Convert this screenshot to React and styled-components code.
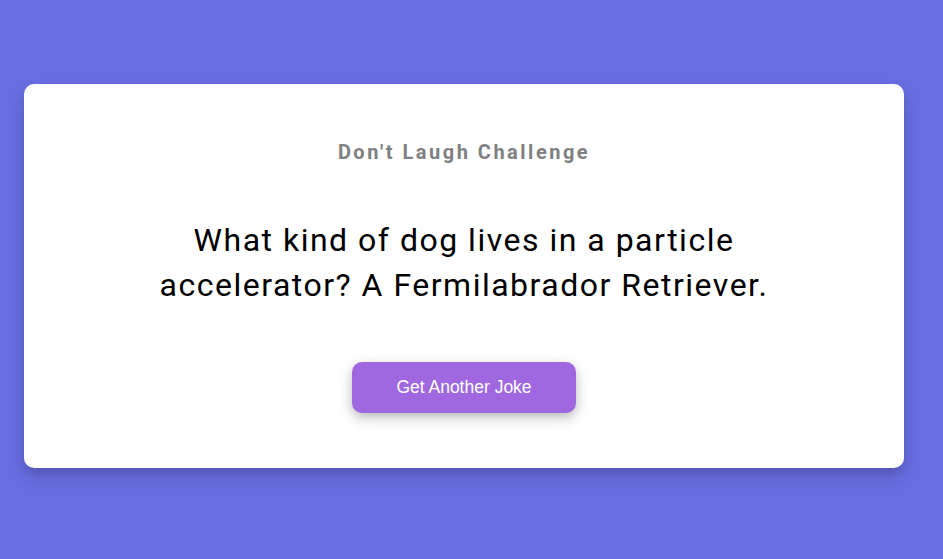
import React from "react"
import styled, { createGlobalStyle } from "styled-components"

const GlobalStyle = createGlobalStyle`
  body {
    margin: 0;
    background: #686de0;
    font-family: Roboto, "Liberation Sans", sans-serif;
  }
`

const Page = styled.main`
  min-height: 559px;
  padding: 84px 39px 0 24px;
  box-sizing: border-box;
`

const Card = styled.section`
  height: 384px;
  box-sizing: border-box;
  background: #fff;
  border-radius: 10px;
  box-shadow: 0 10px 20px rgba(0, 0, 0, 0.1), 0 6px 6px rgba(0, 0, 0, 0.1);
  padding: 56px 20px 0;
  display: flex;
  flex-direction: column;
  align-items: center;
`

const Title = styled.h3`
  margin: 0;
  font-size: 20px;
  font-weight: 700;
  letter-spacing: 2.5px;
  color: #7f8081;
`

const Joke = styled.p`
  margin: 54px 0 0;
  max-width: 640px;
  font-size: 32px;
  line-height: 45px;
  letter-spacing: 1.5px;
  text-align: center;
  color: #000;
`

const Button = styled.button`
  margin-top: 54px;
  width: 224px;
  height: 51px;
  border: 0;
  border-radius: 10px;
  background: #9f68e0;
  color: #fff;
  font-family: "Liberation Sans", Arial, sans-serif;
  font-size: 17.5px;
  box-shadow: 0 5px 15px rgba(0, 0, 0, 0.2), 0 3px 6px rgba(0, 0, 0, 0.1);
  cursor: pointer;
`

const App = () => {
  return (
    <>
      <GlobalStyle />
      <Page>
        <Card>
          <Title>Don't Laugh Challenge</Title>
          <Joke>
            What kind of dog lives in a particle accelerator? A Fermilabrador
            Retriever.
          </Joke>
          <Button>Get Another Joke</Button>
        </Card>
      </Page>
    </>
  )
}

export default App
